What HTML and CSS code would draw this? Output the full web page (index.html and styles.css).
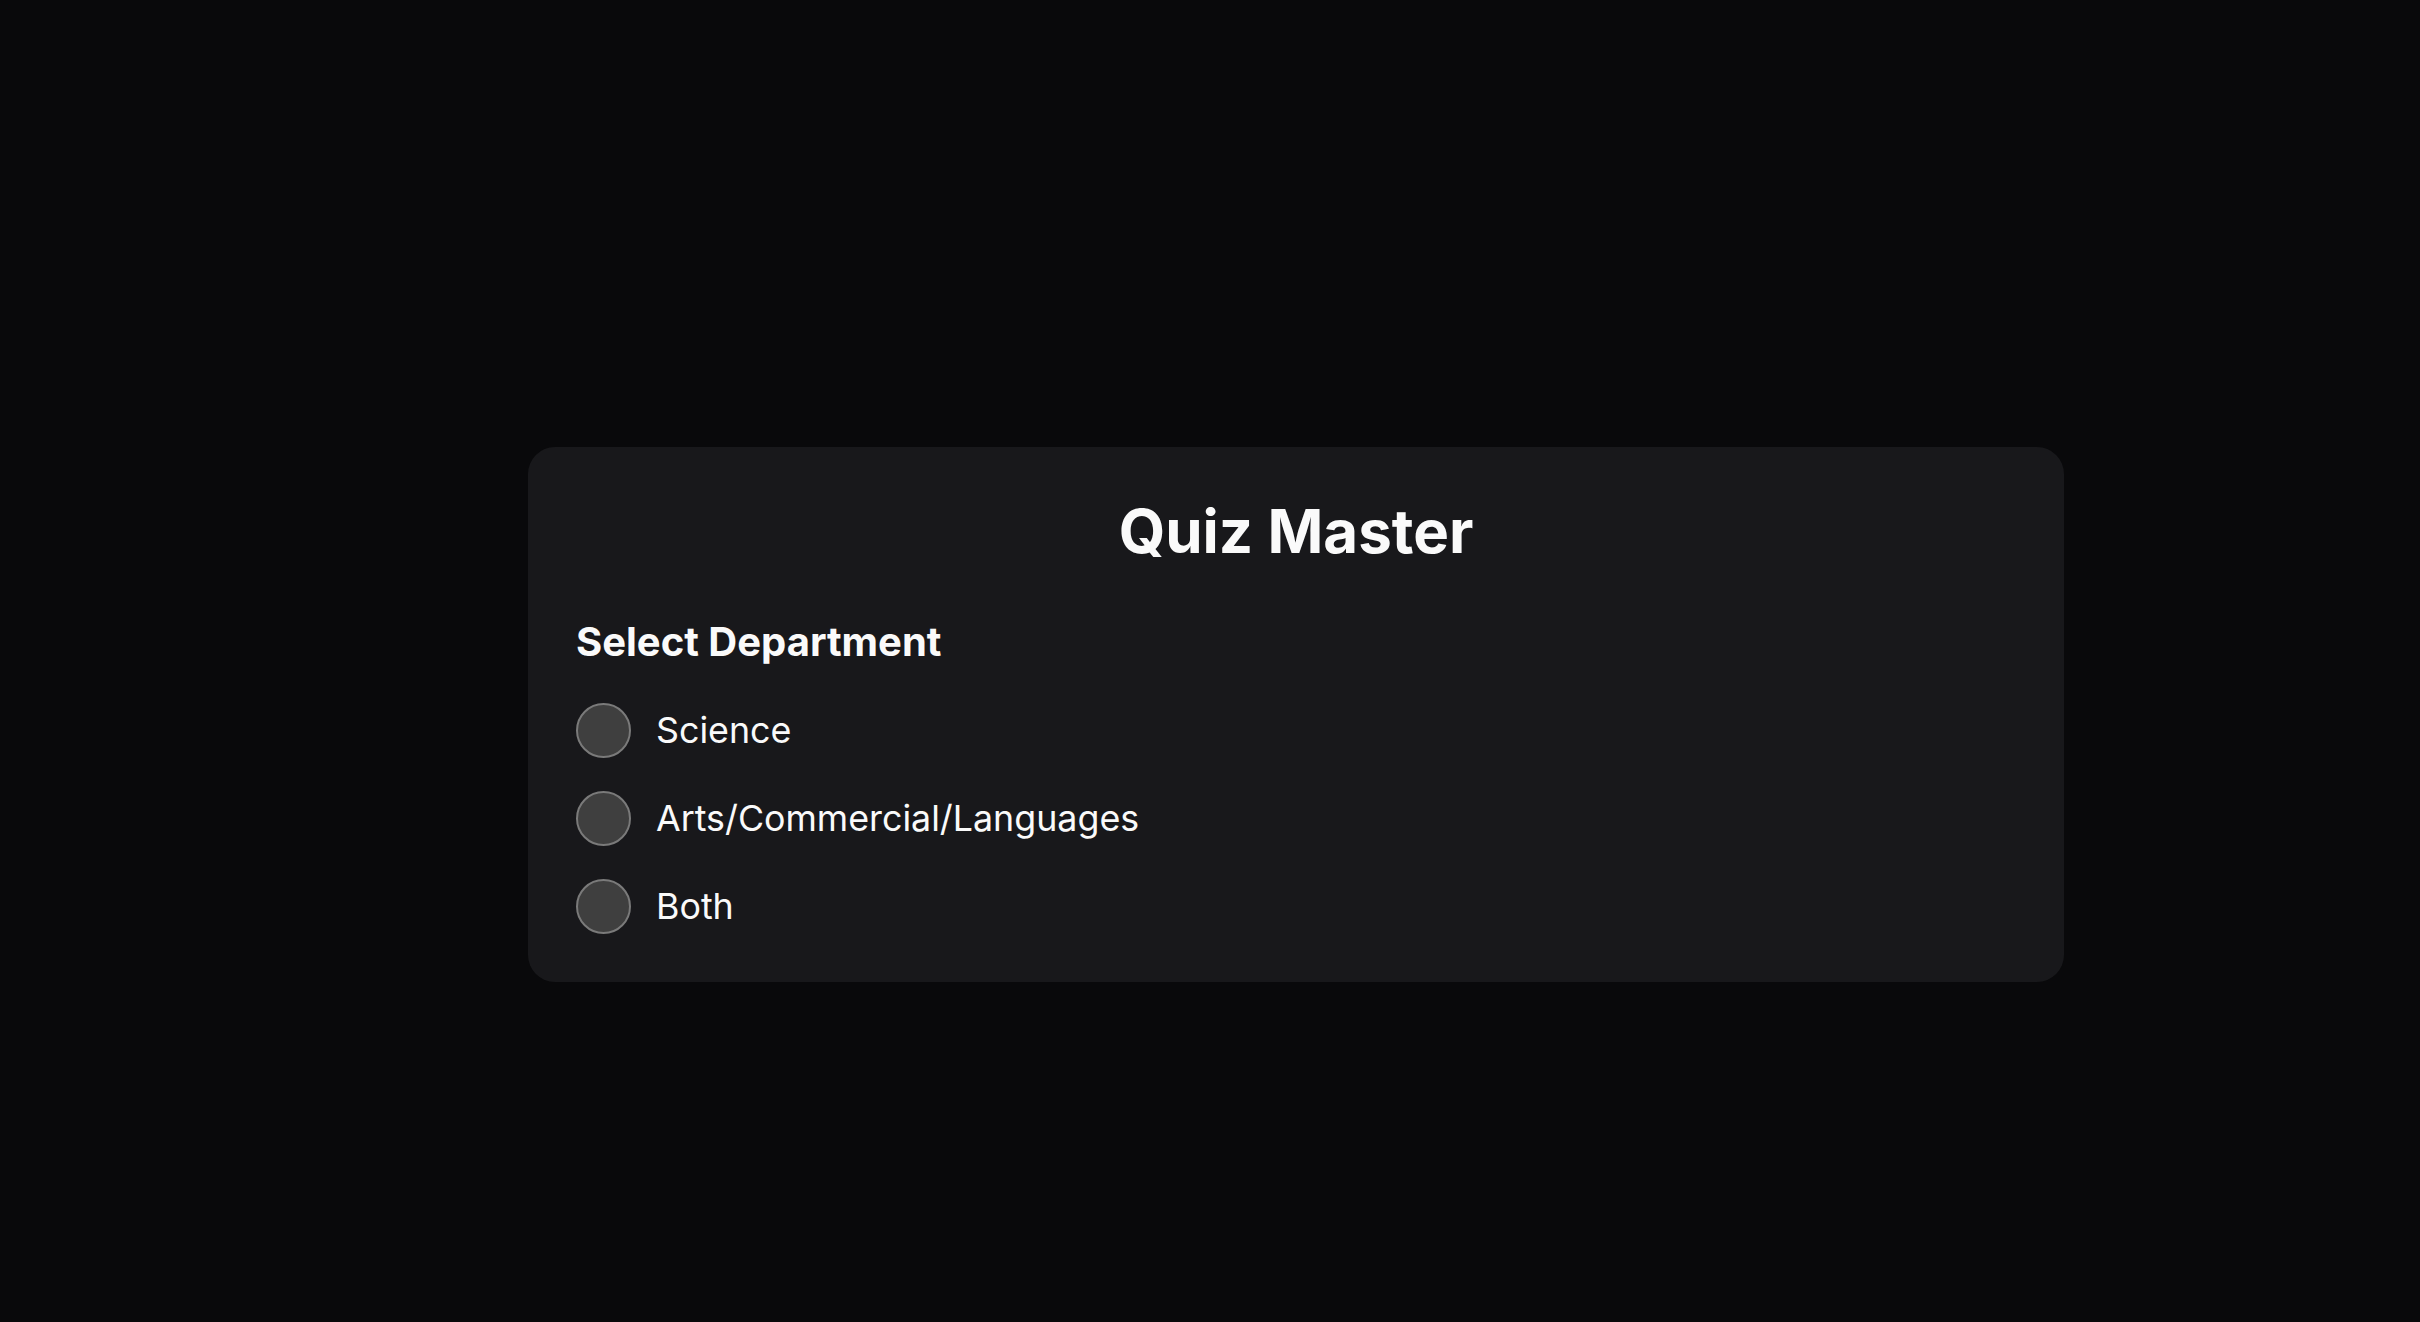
FILE: index.html
```html
<!DOCTYPE html>
<html lang="en">
<head>
<meta charset="utf-8">
<title>Quiz Master</title>
<link rel="stylesheet" href="styles.css">
</head>
<body>
<main class="page">
  <section class="card">
    <h1 class="title">Quiz Master</h1>
    <h2 class="subtitle">Select Department</h2>
    <div class="options">
      <label class="option"><span class="radio"></span><span class="label">Science</span></label>
      <label class="option"><span class="radio"></span><span class="label">Arts/Commercial/Languages</span></label>
      <label class="option"><span class="radio"></span><span class="label">Both</span></label>
    </div>
  </section>
</main>
</body>
</html>
```

FILE: styles.css
```css
* { box-sizing: border-box; }
html, body {
  margin: 0;
  padding: 0;
  background: #09090b;
  font-family: Inter, "Noto Sans", sans-serif;
  color: #fafafa;
}
.page {
  min-height: 100vh;
  display: flex;
  align-items: center;
  justify-content: center;
  padding: 106px 0 0 172px;
}
.card {
  width: 1536px;
  background: #18181b;
  border-radius: 27px;
  padding: 48px;
  display: flex;
  flex-direction: column;
}
.title {
  margin: 0;
  font-size: 60px;
  line-height: 72px;
  font-weight: 700;
  text-align: center;
}
.subtitle {
  margin: 51px 0 0;
  font-size: 40px;
  line-height: 48px;
  font-weight: 700;
}
.options {
  margin-top: 37px;
  display: flex;
  flex-direction: column;
  gap: 33px;
}
.option {
  display: flex;
  align-items: center;
  gap: 25px;
}
.radio {
  width: 55px;
  height: 55px;
  border-radius: 50%;
  background: #3f3f3f;
  border: 2px solid #7a7a7a;
  flex: none;
}
.label {
  font-size: 35.8px;
  line-height: 44px;
  font-weight: 400;
}
```
